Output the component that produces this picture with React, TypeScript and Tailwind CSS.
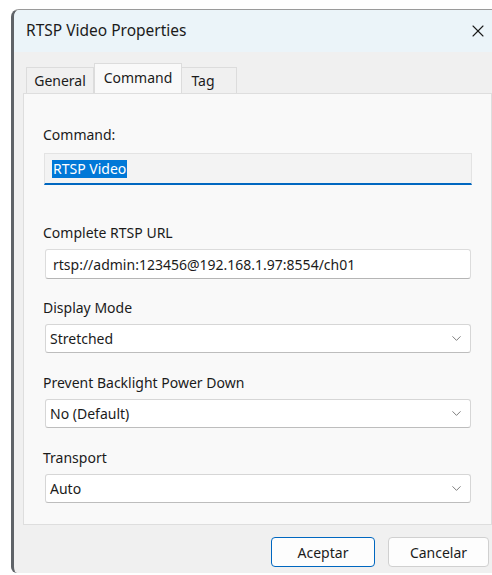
import { ChevronDown, X } from "lucide-react";

const font = { fontFamily: '"Noto Sans", "Open Sans", sans-serif' };

function Select({ value }: { value: string }) {
  return (
    <div className="ml-[2px] mr-[1px] flex h-[29px] items-center justify-between rounded-[3px] border border-[#d6d6d6] border-b-[#bdbdbd] bg-white pl-[4px] pr-[6px] text-[14px] text-[#1b1b1b]">
      <span>{value}</span>
      <ChevronDown size={15} strokeWidth={1.3} className="text-[#606060]" />
    </div>
  );
}

function Label({ children }: { children: React.ReactNode }) {
  return <div className="h-[20px] text-[14px] leading-[20px] text-[#1b1b1b]">{children}</div>;
}

export default function App() {
  return (
    <div className="h-[575px] w-[492px] overflow-hidden bg-white pl-[11px] pt-[9px]" style={font}>
      <div className="flex h-[564px] flex-col overflow-hidden rounded-tl-[8px] rounded-bl-[6px] border-l-[3px] border-t border-l-[#5f6368] border-t-[#9a9a9a] bg-[#f0f0f0]">
        {/* title bar */}
        <div className="flex h-[42px] items-center justify-between bg-[#ebf4f9] pl-[12px] pr-[4px]">
          <span className="text-[15.5px] text-[#1b1b1b]">RTSP Video Properties</span>
          <X size={20} strokeWidth={1.3} className="text-[#1b1b1b]" />
        </div>

        {/* tabs */}
        <div className="flex h-[41px] items-end pl-[12px] text-[14px] text-[#1b1b1b]">
          <div className="flex h-[26px] w-[68px] items-center justify-center border border-b-0 border-[#dcdcdc] bg-[#f0f0f0]">
            General
          </div>
          <div className="-mb-px flex h-[31px] w-[88px] items-start justify-center border border-b-0 border-[#dcdcdc] bg-[#f9f9f9] pt-[3px]">
            Command
          </div>
          <div className="flex h-[26px] w-[55px] items-center justify-center border border-b-0 border-l-0 border-[#dcdcdc] bg-[#f0f0f0] pr-[12px]">
            Tag
          </div>
        </div>

        {/* page */}
        <div className="ml-[9px] flex h-[432px] flex-col border border-[#dedede] bg-[#f9f9f9] pl-[19px] pr-[19px] pt-[31px]">
          <Label>Command:</Label>
          <div className="ml-[1px] mt-[8px] flex h-[32px] items-center border border-[#e3e3e3] border-b-2 border-b-[#0067c0] bg-[#f3f3f3] pl-[7px]">
            <span className="bg-[#0078d7] px-px text-[14px] leading-[18px] text-white">RTSP Video</span>
          </div>

          <div className="mt-[38px]">
            <Label>Complete RTSP URL</Label>
          </div>
          <div className="ml-[2px] mr-[1px] mt-[6px] flex h-[30px] items-center rounded-[3px] border border-[#dcdcdc] border-b-[#b5b5b5] bg-white pl-[7px] text-[14px] text-[#1b1b1b]">
            rtsp://admin:123456@192.168.1.97:8554/ch01
          </div>

          <div className="mt-[19px]">
            <Label>Display Mode</Label>
          </div>
          <div className="mt-[6px]">
            <Select value="Stretched" />
          </div>

          <div className="mt-[20px]">
            <Label>Prevent Backlight Power Down</Label>
          </div>
          <div className="mt-[6px]">
            <Select value="No (Default)" />
          </div>

          <div className="mt-[20px]">
            <Label>Transport</Label>
          </div>
          <div className="mt-[6px]">
            <Select value="Auto" />
          </div>
        </div>

        {/* buttons */}
        <div className="flex justify-end gap-[13px] pr-[3px] pt-[12px] text-[14px] text-[#1b1b1b]">
          <button className="flex h-[30px] w-[104px] items-center justify-center rounded-[4px] border border-[#0067c0] bg-[#fdfdfd]">
            Aceptar
          </button>
          <button className="flex h-[30px] w-[101px] items-center justify-center rounded-[4px] border border-[#d0d0d0] bg-[#fdfdfd]">
            Cancelar
          </button>
        </div>
      </div>
    </div>
  );
}
